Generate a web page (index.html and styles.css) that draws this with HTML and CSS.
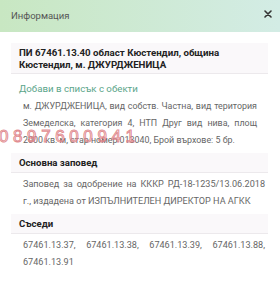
FILE: index.html
```html
<!DOCTYPE html>
<html lang="bg">
<head>
  <meta charset="UTF-8" />
  <meta name="viewport" content="width=device-width, initial-scale=1.0"/>
  <title>Информация</title>
  <link rel="stylesheet" href="styles.css">
</head>
<body>

<div class="header">
  <span class="header-title">Информация</span>
  <svg class="close" width="8" height="8" viewBox="0 0 8 8"><path d="M1 1L7 7M7 1L1 7" stroke="#333" stroke-width="1.6" stroke-linecap="round"/></svg>
</div>

<div class="content">
  <div class="title-box">ПИ 67461.13.40 област Кюстендил, община Кюстендил, м. ДЖУРДЖЕНИЦА</div>
  <a class="add-link">Добави в списък с обекти</a>
  <p class="text desc">м. ДЖУРДЖЕНИЦА, вид собств. Частна, вид територия Земеделска, категория 4, НТП Друг вид нива, площ 2000 кв. м, стар номер 013040, Брой върхове: 5 бр.</p>

  <div class="section">Основна заповед</div>
  <p class="text">Заповед за одобрение на КККР РД-18-1235/13.06.2018 г., издадена от ИЗПЪЛНИТЕЛЕН ДИРЕКТОР НА АГКК</p>

  <div class="section">Съседи</div>
  <p class="text">67461.13.37, 67461.13.38, 67461.13.39, 67461.13.88, 67461.13.91</p>
</div>

<div class="watermark">0897600941</div>

</body>
</html>
```

FILE: styles.css
```css
body { margin: 0; font-family: Roboto, "Liberation Sans", sans-serif; background: #fff; color: #555; position: relative; }
.header { height: 32px; display: flex; align-items: center; justify-content: space-between; padding: 0 8px 2px 11px; box-sizing: border-box; background: linear-gradient(90deg, #c8e7c2, #d3ece5); }
.header-title { font-size: 9.5px; color: #555; }
.close { display: block; margin-top: -2px; }
.content { padding: 11px 12px 0 11px; }
.title-box { background: #faf8fa; padding: 4px 8px 2px 8px; font-size: 9.7px; font-weight: bold; line-height: 12px; color: #222; border-bottom: 1px solid #ece9ec; }
.add-link { display: block; margin: 7px 0 0 8px; font-size: 9.7px; color: #5aa58a; line-height: 16px; }
.text { margin: 3px 0 0 0; padding: 0 3px 0 12px; font-size: 9.1px; line-height: 17px; color: #666; text-align: justify; }
.desc { margin-top: 1px; padding-right: 11px; font-size: 8.9px; }
.section { margin-top: 4px; background: #faf8fa; padding: 2px 8px; font-size: 9.6px; font-weight: bold; line-height: 15px; color: #222; border-bottom: 1px solid #ece9ec; }
.watermark { position: absolute; left: -1px; top: 127px; font-size: 17px; letter-spacing: 4.6px; color: rgba(255, 255, 255, 0.3); -webkit-text-stroke: 1px rgba(220, 120, 125, 0.85); font-family: "Liberation Sans", sans-serif; line-height: 20px; }
```
